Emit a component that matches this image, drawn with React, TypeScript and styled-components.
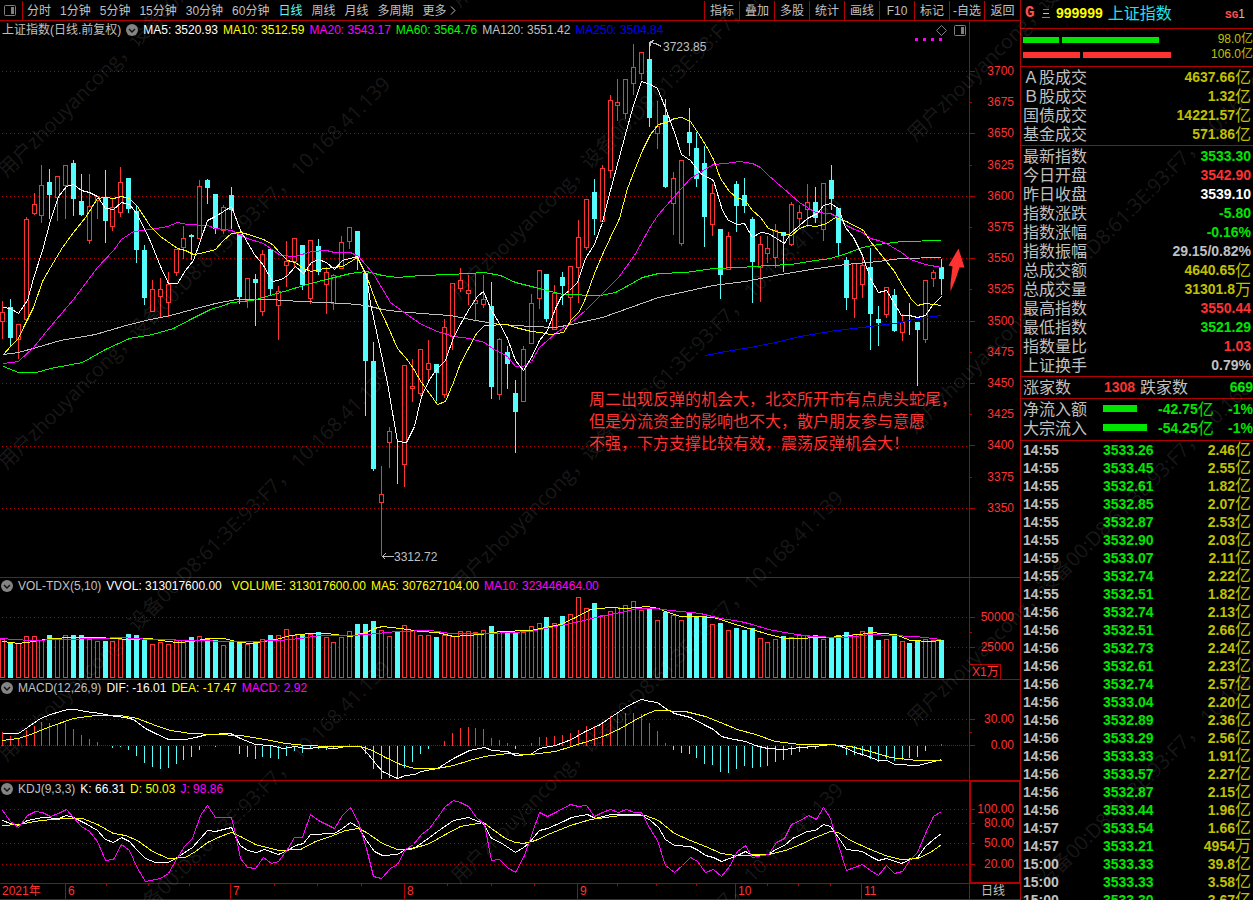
import React from "react";
import styled, { createGlobalStyle, css } from "styled-components";

const RED = "#ff3232";
const LINE = "#b00000";
const CYAN = "#54fcfc";
const GREEN = "#00e600";
const GRAY = "#c0c0c0";
const GOLD = "#c0c000";
const YELLOW = "#ffff00";
const MAGENTA = "#ff00ff";
const WHITE = "#ffffff";

const GlobalStyle = createGlobalStyle`
  * { box-sizing: border-box; }
  body {
    margin: 0;
    background: #000;
    color: ${GRAY};
    font: 12px/16px "Liberation Sans", "Noto Sans CJK SC", sans-serif;
  }
  button { font: inherit; color: inherit; background: none; border: 0; padding: 0; margin: 0; cursor: pointer; }
`;

/* ---------- data ---------- */

type Candle = [up: 0 | 1, high: number, top: number, bottom: number, low: number];

const candles: Candle[] = [
  [1, 300, 312, 321, 338], [0, 298, 307, 338, 345], [1, 324, 324, 339, 358], [1, 216, 219, 319, 319],
  [1, 192, 204, 213, 214], [1, 164, 185, 215, 222], [0, 168, 182, 195, 218], [1, 176, 176, 197, 220],
  [1, 164, 165, 185, 218], [0, 159, 163, 199, 215], [0, 173, 201, 215, 215], [1, 173, 206, 240, 243],
  [1, 196, 196, 200, 218], [0, 169, 197, 221, 242], [1, 197, 207, 226, 230], [1, 166, 182, 212, 216],
  [0, 178, 178, 209, 212], [0, 205, 211, 250, 262], [0, 244, 250, 298, 304], [1, 279, 289, 311, 311],
  [1, 277, 289, 296, 317], [1, 271, 284, 302, 316], [1, 248, 249, 272, 275], [1, 225, 238, 247, 258],
  [0, 233, 235, 237, 259], [1, 179, 186, 238, 238], [0, 178, 180, 188, 203], [0, 193, 194, 229, 233],
  [1, 204, 207, 230, 233], [0, 186, 195, 210, 228], [0, 233, 234, 297, 303], [1, 278, 278, 300, 307],
  [0, 273, 279, 283, 325], [1, 249, 254, 311, 315], [0, 248, 249, 289, 294], [1, 285, 291, 305, 339],
  [1, 240, 261, 265, 286], [1, 237, 238, 261, 267], [0, 245, 245, 285, 289], [1, 239, 240, 298, 303],
  [0, 238, 246, 272, 274], [1, 266, 272, 284, 313], [1, 273, 275, 303, 309], [1, 235, 242, 268, 268],
  [1, 226, 227, 241, 248], [0, 231, 231, 258, 269], [0, 272, 273, 361, 415], [0, 341, 361, 469, 470],
  [1, 465, 494, 502, 555], [1, 426, 431, 442, 467], [0, 440, 448, 449, 483], [1, 365, 365, 464, 486],
  [1, 358, 386, 388, 401], [1, 349, 349, 393, 395], [1, 339, 363, 369, 382], [0, 363, 364, 373, 400],
  [1, 318, 327, 394, 397], [1, 283, 283, 336, 349], [1, 267, 280, 288, 291], [1, 274, 290, 293, 304],
  [1, 272, 300, 303, 319], [1, 274, 299, 304, 307], [0, 281, 306, 387, 398], [1, 337, 339, 394, 399],
  [0, 345, 352, 364, 388], [0, 379, 393, 412, 452], [1, 345, 349, 401, 401], [1, 293, 303, 343, 343],
  [1, 270, 270, 298, 308], [0, 274, 274, 319, 321], [1, 284, 293, 329, 329], [0, 271, 277, 286, 304],
  [1, 266, 266, 297, 322], [1, 219, 237, 267, 302], [1, 199, 199, 247, 249], [0, 178, 192, 219, 234],
  [1, 164, 168, 221, 221], [1, 94, 100, 170, 177], [1, 78, 102, 105, 120], [1, 79, 79, 113, 118],
  [1, 43, 67, 83, 94], [1, 51, 52, 73, 79], [0, 41, 59, 118, 126], [1, 100, 126, 133, 148],
  [0, 98, 115, 187, 187], [1, 171, 178, 203, 234], [1, 160, 160, 243, 245], [0, 107, 132, 143, 155],
  [0, 131, 148, 179, 186], [0, 145, 163, 217, 246], [1, 183, 193, 224, 235], [0, 229, 229, 275, 298],
  [1, 231, 236, 269, 269], [0, 180, 184, 206, 231], [0, 177, 195, 206, 212], [0, 216, 219, 262, 302],
  [1, 235, 244, 267, 301], [1, 235, 248, 253, 262], [1, 223, 230, 257, 267], [0, 232, 232, 236, 271],
  [1, 201, 204, 244, 245], [1, 204, 212, 218, 228], [1, 183, 202, 209, 226], [0, 186, 202, 218, 222],
  [1, 183, 183, 229, 240], [0, 164, 180, 199, 209], [0, 208, 208, 243, 254], [0, 256, 260, 298, 309],
  [1, 263, 263, 298, 317], [1, 255, 265, 284, 297], [0, 247, 267, 314, 349], [0, 305, 319, 323, 345],
  [1, 287, 287, 314, 317], [0, 288, 295, 331, 331], [1, 313, 322, 332, 340], [0, 302, 312, 313, 334],
  [0, 322, 322, 330, 385], [1, 279, 280, 339, 342], [1, 269, 272, 278, 286], [0, 258, 267, 279, 294],
];

const volumes = [
  639, 643, 643, 636, 636, 640, 635, 638, 635, 635, 635, 639, 641, 641, 641, 639, 634, 635, 640, 644,
  642, 644, 640, 640, 637, 636, 638, 640, 645, 642, 642, 644, 641, 639, 635, 635, 629, 635, 634, 634,
  632, 637, 642, 637, 631, 624, 624, 621, 630, 636, 632, 625, 630, 635, 635, 637, 635, 636, 631, 631,
  632, 630, 626, 631, 631, 632, 632, 626, 623, 617, 623, 616, 614, 597, 608, 603, 615, 611, 607, 605,
  601, 610, 609, 620, 612, 615, 620, 613, 616, 616, 624, 623, 630, 628, 630, 628, 638, 642, 639, 636,
  637, 635, 635, 635, 639, 637, 635, 632, 634, 631, 627, 640, 639, 636, 641, 643, 641, 639, 640, 640,
];

const histogram = [
  731, 735, 737, 729, 725, 721, 722, 723, 722, 728, 734, 738, 741, 745, 747, 746, 749, 755, 762, 766,
  768, 767, 763, 759, 756, 749, 745, 746, 745, 745, 753, 756, 758, 756, 757, 758, 755, 750, 752, 748,
  748, 749, 748, 747, 743, 744, 753, 768, 778, 777, 777, 767, 761, 753, 748, 745, 740, 732, 727, 726,
  727, 728, 737, 739, 742, 748, 744, 742, 736, 736, 735, 734, 732, 729, 725, 725, 722, 715, 712, 712,
  712, 713, 722, 730, 742, 749, 752, 753, 757, 763, 764, 771, 772, 768, 765, 767, 766, 765, 761, 759,
  754, 751, 748, 748, 745, 745, 746, 754, 754, 755, 758, 761, 758, 760, 759, 757, 756, 750, 745, 743,
];

const xAt = (i: number) => Math.round(2 + i * 7.891);

const priceLines: [string, string][] = [
  ["#c0c0c0", "3,354 18,352 36,347 60,340 95,334 129,324 150,319 170,315 192,309 215,303 236,299 270,299 300,301 345,303 366,305 382,309 397,311 421,313 450,315 475,320 500,324 531,326 555,327 571,324 602,317 630,307 658,297 690,290 713,285 745,281 775,275 810,269 845,264 878,261 900,258 941,257"],
  ["#0000ff", "705,355 720,352 750,347 775,342 800,336 836,330 870,326 900,322 917,318 941,315"],
  ["#00ff00", "3,366 18,372 36,372 50,368 82,362 105,349 129,338 152,334 173,328 192,318 210,309 223,305 231,302 252,300 266,296 287,290 303,285 318,281 334,277 350,273 366,271 382,275 397,277 421,275 450,274 484,272 500,275 515,282 531,286 550,291 563,294 600,295 615,292 626,286 642,277 658,273 685,272 713,268 739,267 768,265 791,264 815,260 830,258 846,253 862,247 878,244 902,241 941,240"],
  [MAGENTA, "3,363 18,361 33,347 50,326 73,299 97,267 113,250 121,239 133,231 150,229 167,226 177,222 187,224 207,225 215,228 231,230 247,238 263,243 280,255 295,256 311,251 326,250 334,252 350,252 358,256 366,265 374,275 390,302 405,313 421,324 437,331 453,336 469,338 484,342 492,348 507,356 515,366 523,366 531,361 539,347 555,333 571,322 585,310 602,293 618,277 634,255 650,226 658,214 674,196 690,178 698,173 713,164 725,163 739,161 752,163 760,167 768,175 783,188 799,202 815,212 830,213 838,217 846,225 854,229 862,232 870,238 878,240 886,243 901,252 910,259 925,264 941,267"],
  [YELLOW, "3,354 10,346 18,338 24,325 33,307 42,281 50,267 62,247 73,232 85,217 97,198 105,197 113,198 121,196 129,198 137,206 150,226 160,236 177,248 185,250 193,254 200,253 215,249 223,240 231,233 240,232 248,234 263,239 272,244 280,253 287,260 295,262 303,268 311,271 318,269 326,268 342,266 357,257 366,275 375,300 387,325 397,348 405,357 413,368 421,382 429,393 437,404 445,401 453,382 460,363 468,348 476,333 484,325 507,324 515,327 531,331 540,332 550,334 563,332 571,319 579,311 585,298 594,273 602,254 610,237 619,218 627,188 634,170 642,150 650,134 658,124 666,122 674,118 681,117 690,121 698,133 706,146 713,159 720,178 729,191 737,198 744,199 752,210 760,217 768,228 776,231 783,233 791,235 799,228 807,225 816,226 826,223 835,217 846,221 863,230 870,241 878,251 886,261 894,271 902,285 911,299 917,305 925,303 933,304 941,305"],
  [WHITE, "3,307 10,308 18,313 27,300 33,278 42,250 50,220 58,196 66,186 73,184 81,190 89,192 97,196 105,208 113,209 121,202 129,204 137,214 150,241 160,266 168,283 177,283 185,270 193,260 200,240 207,220 215,216 223,211 231,206 240,230 254,254 263,265 272,281 281,279 287,275 295,266 303,273 311,262 318,259 326,262 334,269 342,260 357,256 366,275 370,303 379,345 387,383 397,441 406,442 414,426 421,396 429,379 437,368 445,360 453,337 461,322 469,308 477,296 483,291 491,310 499,323 507,338 515,360 523,370 531,357 539,340 547,330 555,308 561,296 569,290 577,282 585,258 594,244 602,222 610,190 618,160 626,130 633,105 641,81 650,84 657,88 666,110 674,132 681,154 690,160 700,173 713,180 722,210 728,220 737,224 744,223 752,237 760,232 768,233 784,243 790,233 807,218 817,213 823,205 830,203 838,208 845,227 853,237 862,255 870,278 878,292 886,290 894,303 901,315 909,315 917,317 925,315 932,305 941,296"],
];

const volumeLines: [string, string][] = [
  [YELLOW, "2,641 18,643 33,641 50,638 73,637 97,637 113,638 129,639 150,638 160,640 177,642 192,641 207,638 223,638 240,642 250,643 263,641 276,639 290,635 310,633 326,633 350,636 366,632 374,628 382,626 400,628 420,631 437,632 453,636 480,634 500,631 530,630 545,627 560,624 575,617 590,609 610,607 625,608 647,606 658,608 665,611 680,616 697,616 713,617 720,619 735,624 752,629 768,634 785,638 800,638 815,637 830,637 846,635 860,634 870,632 895,634 910,640 930,641 941,640"],
  [MAGENTA, "0,638 30,640 60,639 100,638 120,637 150,639 200,640 225,641 250,641 280,640 300,638 320,635 350,635 366,634 397,631 430,630 450,633 490,633 530,631 550,627 575,622 600,616 620,612 637,608 655,608 670,610 700,613 720,618 740,621 752,624 768,629 790,633 810,636 840,637 855,636 870,634 890,635 915,636 941,639"],
];

const macdLines: [string, string][] = [
  [WHITE, "2,733 18,733 27,727 40,718 50,714 60,711 67,709 75,709 85,711 100,713 115,716 125,717 133,719 145,728 155,733 168,739 185,739 195,737 207,734 230,733 240,738 255,744 270,745 283,748 295,746 305,748 320,747 335,748 345,746 360,746 368,754 375,763 382,771 397,778 405,775 414,774 421,771 437,768 453,758 469,750 484,747 492,750 507,751 515,755 530,754 539,748 555,745 571,739 585,731 600,724 610,717 625,707 634,702 641,699 650,701 657,702 665,708 674,713 690,717 705,725 713,729 721,736 729,738 745,741 755,745 767,748 784,749 800,747 815,746 830,744 838,745 846,748 855,752 865,755 878,760 886,760 895,764 917,765 930,762 941,759"],
  [YELLOW, "2,740 18,738 30,734 50,726 73,718 95,715 120,715 137,718 155,725 170,730 190,733 215,734 240,735 265,739 285,743 305,745 330,746 360,746 372,750 385,757 400,764 414,768 437,768 453,765 469,760 484,756 507,753 530,754 555,751 571,746 590,740 605,735 620,728 634,720 645,714 655,710 685,711 705,716 720,722 737,729 755,734 775,741 800,744 830,744 850,746 870,751 890,757 917,760 941,760"],
];

const kdjLines: [string, string][] = [
  [WHITE, "2,820 10,823 18,825 27,820 42,817 58,818 66,815 73,817 85,823 97,830 105,839 113,842 121,837 129,841 137,850 145,858 155,862 168,862 175,858 192,847 200,838 207,830 215,831 231,827 236,838 240,845 247,850 256,852 264,849 278,854 287,850 295,845 303,843 310,834 334,833 342,828 350,822 358,827 366,840 374,851 382,855 397,854 405,849 415,847 429,837 437,831 453,820 468,817 483,823 491,838 500,842 515,852 523,847 528,843 539,830 547,828 563,821 571,817 587,814 595,818 610,814 640,814 650,820 658,827 665,839 674,845 690,846 698,850 705,855 713,857 721,861 729,858 737,855 745,851 752,855 768,854 775,849 784,845 792,838 807,831 815,830 823,824 830,826 838,837 846,849 862,851 870,856 878,860 886,858 901,863 910,859 917,857 925,846 933,839 941,833"],
  [YELLOW, "2,825 18,824 40,820 66,818 82,818 97,824 113,833 125,835 137,840 152,851 168,858 185,857 195,851 207,842 220,836 231,832 240,836 255,844 278,850 300,849 315,841 330,836 345,830 358,828 366,832 382,843 397,849 410,849 429,843 445,834 460,826 483,822 491,828 505,838 515,842 523,843 535,840 550,833 570,825 590,819 620,815 645,815 658,820 674,833 690,840 705,846 721,853 735,855 768,854 785,850 800,844 815,837 830,831 838,832 850,840 870,849 885,855 900,859 917,858 930,852 941,844"],
  [MAGENTA, "2,810 10,821 18,827 27,815 35,811 42,812 50,816 58,813 66,809 73,817 81,826 89,831 97,841 105,860 113,859 121,844 129,850 137,868 145,881 160,878 168,873 176,859 184,846 192,838 200,815 207,805 215,817 231,817 236,838 240,858 247,867 255,868 263,857 271,863 278,861 287,849 294,837 302,837 310,814 318,820 334,828 342,815 350,807 358,822 366,848 373,876 381,878 390,868 397,864 405,849 413,844 421,834 429,828 437,817 445,806 453,800 460,802 468,806 476,817 484,824 491,860 499,859 507,867 515,872 524,855 531,835 539,812 547,816 555,812 570,804 578,806 586,805 594,816 602,812 610,809 618,812 626,809 634,812 641,812 650,829 657,840 665,865 674,872 682,865 690,857 697,861 705,872 713,869 721,876 729,866 737,851 745,845 752,857 768,854 776,842 784,838 791,824 800,820 808,815 816,819 823,807 830,818 838,845 846,870 854,867 862,864 870,870 878,875 886,865 894,873 902,871 910,859 917,852 925,833 933,816 941,811"],
];

type AxisMark = { y: number; label?: string };

const priceMarks: AxisMark[] = Array.from({ length: 15 }, (_, i) => ({
  y: Math.round(71 + i * 31.2),
  label: String(3700 - i * 25),
}));

const months: [number, string][] = [[65, "6"], [230, "7"], [404, "8"], [577, "9"], [735, "10"], [861, "11"]];
const minorDays = [106, 148, 189, 274, 317, 361, 447, 491, 534, 617, 656, 696, 767, 798, 830];

const periods = ["分时", "1分钟", "5分钟", "15分钟", "30分钟", "60分钟", "日线", "周线", "月线", "多周期"];
const tools = ["指标", "叠加", "多股", "统计", "画线", "F10", "标记", "-自选", "返回"];

type Quote = [label: string, value: string, unit: string, color: string];

const turnover: Quote[] = [
  ["Ａ股成交", "4637.66", "亿", GOLD],
  ["Ｂ股成交", "1.32", "亿", GOLD],
  ["国债成交", "14221.57", "亿", GOLD],
  ["基金成交", "571.86", "亿", GOLD],
];

const quotes: Quote[] = [
  ["最新指数", "3533.30", "", GREEN],
  ["今日开盘", "3542.90", "", RED],
  ["昨日收盘", "3539.10", "", WHITE],
  ["指数涨跌", "-5.80", "", GREEN],
  ["指数涨幅", "-0.16%", "", GREEN],
  ["指数振幅", "29.15/0.82%", "", GRAY],
  ["总成交额", "4640.65", "亿", GOLD],
  ["总成交量", "31301.8", "万", GOLD],
  ["最高指数", "3550.44", "", RED],
  ["最低指数", "3521.29", "", GREEN],
  ["指数量比", "1.03", "", RED],
  ["上证换手", "0.79%", "", GRAY],
];

const flows = [
  { label: "净流入额", bar: 34, value: "-42.75", pct: "-1%" },
  { label: "大宗流入", bar: 44, value: "-54.25", pct: "-1%" },
];

const ticks = `14:55 3533.26 2.46亿
14:55 3533.45 2.55亿
14:55 3532.61 1.82亿
14:55 3532.85 2.07亿
14:55 3532.87 2.53亿
14:55 3532.90 2.03亿
14:55 3533.07 2.11亿
14:55 3532.74 2.22亿
14:55 3532.51 1.82亿
14:56 3532.74 2.13亿
14:56 3532.51 2.66亿
14:56 3532.73 2.24亿
14:56 3532.61 2.23亿
14:56 3532.74 2.57亿
14:56 3533.04 2.20亿
14:56 3532.89 2.36亿
14:56 3533.29 2.56亿
14:56 3533.33 1.91亿
14:56 3533.57 2.27亿
14:56 3532.87 2.15亿
14:56 3533.44 1.96亿
14:57 3533.54 1.66亿
14:57 3533.21 4954万
15:00 3533.33 39.8亿
15:00 3533.33 3.58亿
15:00 3533.30 3.67亿`.split("\n").map((line) => line.split(" "));

/* ---------- layout ---------- */

const Screen = styled.div`
  position: relative;
  display: grid;
  grid-template-columns: minmax(0, 1fr) 233px;
  height: 100vh;
  min-height: 600px;
  overflow: hidden;
  white-space: nowrap;
`;

const Workspace = styled.main`
  display: grid;
  grid-template-rows: 21px minmax(0, 557fr) minmax(0, 102fr) minmax(0, 101fr) minmax(0, 103fr) minmax(0, 16fr);
  min-width: 0;
`;

const Toolbar = styled.nav`
  display: flex;
  justify-content: space-between;
  padding-top: 1px;
  border-bottom: 1px solid ${LINE};
  overflow: hidden;
`;

const Periods = styled.div`
  display: flex;
  align-items: center;
  gap: 9px;
`;

const LayoutButton = styled.button`
  display: flex;
  align-items: center;
  justify-content: center;
  width: 23px;
  height: 19px;
  margin-right: -5px;
  padding-right: 3px;
  border-right: 1px solid ${LINE};
`;

const PeriodButton = styled.button<{ $active?: boolean }>`
  color: ${(p) => (p.$active ? CYAN : GRAY)};
`;

const Tools = styled.div`
  display: flex;
`;

const ToolButton = styled.button`
  width: 35px;
  border-left: 1px solid ${LINE};
  text-align: center;

  &:last-child { width: 36px; }
`;

const Panel = styled.section`
  display: grid;
  grid-template-columns: minmax(0, 1fr) 51px;
  border-bottom: 1px solid ${LINE};
  min-height: 0;
`;

const Plot = styled.div`
  position: relative;
  display: grid;
  grid-template: minmax(0, 1fr) / minmax(0, 1fr);
  min-height: 0;

  > * { grid-area: 1 / 1; }
`;

const PlotSvg = styled.svg`
  display: block;
  width: 100%;
  height: 100%;
  shape-rendering: crispEdges;
`;

const Legend = styled.header<{ $tall?: boolean }>`
  z-index: 1;
  display: flex;
  align-items: center;
  align-self: start;
  gap: 5px;
  height: ${(p) => (p.$tall ? 18 : 16)}px;
  padding-left: ${(p) => (p.$tall ? 2 : 1)}px;
  overflow: hidden;
`;

const LegendItem = styled.span<{ $color?: string; $wide?: boolean }>`
  color: ${(p) => p.$color ?? GRAY};
  margin-right: ${(p) => (p.$wide ? 5 : 0)}px;
`;

const IconButton = styled.button`
  display: flex;
  flex: none;
`;

const LegendTools = styled.div`
  display: flex;
  align-items: center;
  gap: 7px;
  margin-left: auto;
  padding-right: 3px;
`;

const Axis = styled.div<{ $selected?: boolean }>`
  position: relative;
  border-left: 1px solid ${LINE};
  color: ${RED};
  ${(p) => p.$selected && css`box-shadow: inset 0 0 0 1px ${LINE};`}
`;

const AxisLabel = styled.span`
  position: absolute;
  right: 6px;
  transform: translateY(-50%);
`;

const AxisTick = styled.i<{ $minor?: boolean }>`
  position: absolute;
  left: 0;
  width: ${(p) => (p.$minor ? 2 : 5)}px;
  height: 1px;
  background: ${LINE};
`;

const UnitBox = styled.span`
  position: absolute;
  left: 0;
  bottom: 0;
  width: 31px;
  height: 15px;
  padding-left: 2px;
  line-height: 15px;
  border: solid ${LINE};
  border-width: 1px 1px 0 0;
`;

const ChartNote = styled.span`
  position: absolute;
  transform: translateY(-50%);
`;

const Comment = styled.p`
  position: absolute;
  margin: 0;
  font-size: 16px;
  line-height: 22px;
  font-family: "Noto Sans CJK SC", sans-serif;
  color: ${RED};
`;

const MonthLabel = styled.span`
  position: absolute;
  top: 0;
  height: 15px;
  padding-left: 2px;
  line-height: 15px;
  border-left: 1px solid ${LINE};
  color: ${RED};
`;

const YearLabel = styled.span`
  padding-left: 2px;
  line-height: 15px;
  color: ${RED};
`;

const DayTick = styled.i`
  position: absolute;
  top: 0;
  width: 1px;
  height: 2px;
  background: ${LINE};
`;

const PeriodCell = styled.div`
  border-left: 1px solid ${LINE};
  padding-right: 4px;
  text-align: center;
  line-height: 15px;
`;

/* ---------- sidebar ---------- */

const Sidebar = styled.aside`
  border-left: 1px solid ${LINE};
  min-width: 0;
  overflow: hidden;
  font-size: 16px;
  line-height: 19px;
`;

const SideBlock = styled.section`
  padding: 1px 2px;
  border-bottom: 1px solid ${LINE};
`;

const Title = styled.header`
  display: flex;
  align-items: center;
  height: 29px;
  padding: 0 8px 2px 4px;
  border-bottom: 1px solid ${LINE};
`;

const Code = styled.b`
  margin: 0 5px 0 6px;
  font-size: 14px;
  color: ${YELLOW};
`;

const IndexName = styled.h1`
  margin: 0;
  font-size: 16px;
  font-weight: 400;
  color: #22e0f0;
`;

const Flag = styled.b`
  width: 17px;
  font-family: "Liberation Mono", monospace;
  font-size: 16px;
  color: #ff5050;
`;

const Source = styled.span`
  margin-left: auto;
  padding-top: 3px;
  font-size: 12px;

  b {
    font-family: "Liberation Mono", monospace;
    font-size: 11px;
    color: #ff5050;
  }
`;

const Depth = styled.section`
  padding: 3px 0 4px 2px;
  border-bottom: 1px solid ${LINE};
`;

const DepthRow = styled.div`
  display: flex;
  align-items: center;
  height: 15px;
  gap: 3px;
  font-size: 12px;
  color: ${GOLD};

  span { margin-left: auto; }
`;

const DepthBar = styled.i<{ $w: number; $color: string }>`
  width: ${(p) => p.$w}px;
  height: 6px;
  background: ${(p) => p.$color};
`;

const DataTable = styled.table`
  width: 100%;
  border-collapse: collapse;

  th, td { padding: 0; font-weight: 400; text-align: left; }
`;

const Row = styled.tr<{ $h: number }>`
  height: ${(p) => p.$h}px;
  line-height: ${(p) => p.$h}px;
`;

const TimeCell = styled.td`
  width: 80px;
`;

const Figure = styled.b<{ $color?: string }>`
  display: inline-block;
  vertical-align: top;
  font-size: 14px;
  color: ${(p) => p.$color ?? "inherit"};
`;

const Unit = styled.span<{ $color: string }>`
  display: inline-block;
  vertical-align: top;
  font-size: 16px;
  color: ${(p) => p.$color};
`;

const ValueCell = styled.td`
  && { text-align: right; }
`;

const Breadth = styled.section`
  display: grid;
  grid-template-columns: 81px 36px 1fr auto;
  height: 22px;
  padding-left: 2px;
  line-height: 21px;
  border-bottom: 1px solid ${LINE};
`;

const FlowBlock = styled.section`
  height: 42px;
  padding: 1px 0 2px 2px;
  border-bottom: 1px solid ${LINE};
`;

const FlowRow = styled.div`
  display: grid;
  grid-template-columns: 80px 55px 1fr auto;
  height: 19px;
`;

const FlowBar = styled.i<{ $w: number }>`
  width: ${(p) => p.$w}px;
  height: 7px;
  margin-top: 5px;
  background: ${GREEN};
`;

const TickBlock = styled.section`
  padding: 0 2px;
`;

const Watermark = styled.div`
  position: absolute;
  inset: 0;
  overflow: hidden;
  pointer-events: none;
  color: rgba(255, 255, 255, 0.1);
  font: 20px/24px "Open Sans", "Noto Sans CJK SC", sans-serif;
`;

const WatermarkText = styled.span`
  position: absolute;
  transform: rotate(-45deg);
  transform-origin: 0 100%;
  white-space: pre;
`;

/* ---------- pieces ---------- */

const Collapse = () => (
  <IconButton aria-label="收起">
    <svg width="12" height="12" viewBox="0 0 12 12">
      <circle cx="6" cy="6" r="6" fill="#848484" />
      <path d="M3 5 L6 8 L9 5" fill="none" stroke="#101010" strokeWidth="1.4" />
    </svg>
  </IconButton>
);

const PanelIcon = () => (
  <svg width="12" height="11" viewBox="0 0 12 11">
    <rect x="0.5" y="0.5" width="11" height="10" rx="1" fill="none" stroke="#808080" />
    <rect x="7" y="2" width="3" height="7" fill="#808080" />
  </svg>
);

const Grid = ({ ys }: { ys: number[] }) => (
  <>
    {ys.map((y) => (
      <line key={y} x1={1} x2={966} y1={y} y2={y} stroke={LINE} strokeDasharray="1 3" />
    ))}
  </>
);

const Lines = ({ data }: { data: [string, string][] }) => (
  <>
    {data.map(([color, points]) => (
      <polyline key={color} points={points} fill="none" stroke={color} />
    ))}
  </>
);

const Scale = ({ top, height, marks }: { top: number; height: number; marks: AxisMark[] }) => (
  <>
    {marks.map(({ y, label }, i) => {
      const at = `${((y - top) / height) * 100}%`;
      const minor = !label || (marks.length > 10 && i % 2 === 1);
      return (
        <React.Fragment key={y}>
          <AxisTick $minor={minor} style={{ top: at }} />
          {label && <AxisLabel style={{ top: at }}>{label}</AxisLabel>}
        </React.Fragment>
      );
    })}
  </>
);

const QuoteTable = ({ rows }: { rows: Quote[] }) => (
  <DataTable>
    <tbody>
      {rows.map(([label, value, unit, color]) => (
        <Row $h={19} key={label}>
          <th scope="row">{label}</th>
          <ValueCell>
            <Figure $color={color}>{value}</Figure>
            {unit && <Unit $color={color}>{unit}</Unit>}
          </ValueCell>
        </Row>
      ))}
    </tbody>
  </DataTable>
);

const noteAt = (x: number, y: number) => ({
  left: `${(x / 969) * 100}%`,
  top: `${((y - 21) / 556) * 100}%`,
});

const watermarkStarts = [[10, 182], [463, 12], [919, 146]].flatMap(([x, y]) =>
  [0, 1, 2, 3, 4].map((row) => [x, y + row * 292])
);

export default function App() {
  return (
    <>
      <GlobalStyle />
      <Screen>
        <Workspace>
          <Toolbar>
            <Periods>
              <LayoutButton aria-label="布局"><PanelIcon /></LayoutButton>
              {periods.map((p) => (
                <PeriodButton key={p} $active={p === "日线"}>{p}</PeriodButton>
              ))}
              <PeriodButton>
                更多{" "}
                <svg width="6" height="9" viewBox="0 0 6 9">
                  <path d="M1 0.5 L5 4.5 L1 8.5" fill="none" stroke={GRAY} />
                </svg>
              </PeriodButton>
            </Periods>
            <Tools>
              {tools.map((t) => <ToolButton key={t}>{t}</ToolButton>)}
            </Tools>
          </Toolbar>

          <Panel>
            <Plot>
              <PlotSvg viewBox="-0.5 20.5 969 556" preserveAspectRatio="none">
                <Grid ys={[71, 133, 196, 258, 321, 383, 446, 508]} />
                {candles.map(([up, high, top, bottom, low], i) => {
                  const x = xAt(i);
                  const end = up ? bottom : Math.max(top, bottom - 1);
                  const color = up ? RED : CYAN;
                  return (
                    <g key={i} stroke={color}>
                      {high < top && <line x1={x} x2={x} y1={high} y2={top} />}
                      {low > end && <line x1={x} x2={x} y1={end} y2={low} />}
                      <rect x={x - 2} y={top} width={4} height={end - top} fill={up ? "#000" : CYAN} />
                    </g>
                  );
                })}
                <Lines data={priceLines} />
                <g stroke={GRAY} fill="none">
                  <path d="M650 42 L655 43 L661 46 M650 42 L650 45 M650 41 L654 40" />
                  <path d="M381 556 H393 M385 553 L382 556 L385 559" />
                </g>
                <path
                  d="M958 248 L964 267 L959 267 L955 279 L950 291 L950 283 L952 266 L948 265 Z"
                  fill={RED}
                  shapeRendering="auto"
                />
                <g fill={MAGENTA}>
                  {[915, 923, 931, 939].map((x) => (
                    <rect key={x} x={x - 0.5} y={37.5} width={3} height={3} />
                  ))}
                </g>
              </PlotSvg>
              <Legend $tall>
                <LegendItem>上证指数(日线.前复权)</LegendItem>
                <Collapse />
                <LegendItem $color={WHITE}>MA5: 3520.93</LegendItem>
                <LegendItem $color={YELLOW}>MA10: 3512.59</LegendItem>
                <LegendItem $color={MAGENTA}>MA20: 3543.17</LegendItem>
                <LegendItem $color="#00ff00">MA60: 3564.76</LegendItem>
                <LegendItem>MA120: 3551.42</LegendItem>
                <LegendItem $color="#0000ff">MA250: 3504.84</LegendItem>
                <LegendTools>
                  <IconButton aria-label="标记">
                    <svg width="11" height="11" viewBox="0 0 11 11">
                      <path d="M5.5 0.5 L10.5 5.5 L5.5 10.5 L0.5 5.5 Z" fill="none" stroke="#808080" />
                    </svg>
                  </IconButton>
                  <IconButton aria-label="侧栏"><PanelIcon /></IconButton>
                </LegendTools>
              </Legend>
              <ChartNote style={noteAt(663, 47)}>3723.85</ChartNote>
              <ChartNote style={noteAt(394, 557)}>3312.72</ChartNote>
              <Comment style={noteAt(589, 387)}>
                周二出现反弹的机会大，北交所开市有点虎头蛇尾，
                <br />
                但是分流资金的影响也不大，散户朋友参与意愿
                <br />
                不强，下方支撑比较有效，震荡反弹机会大！
              </Comment>
            </Plot>
            <Axis>
              <Scale top={21} height={556} marks={priceMarks} />
            </Axis>
          </Panel>

          <Panel>
            <Plot>
              <PlotSvg viewBox="-0.5 577.5 969 101" preserveAspectRatio="none">
                <Grid ys={[617, 647]} />
                {volumes.map((top, i) => (
                  <rect
                    key={i}
                    x={xAt(i) - 2}
                    y={top}
                    width={4}
                    height={677 - top}
                    stroke={candles[i][0] ? RED : CYAN}
                    fill={candles[i][0] ? "#000" : CYAN}
                  />
                ))}
                <Lines data={volumeLines} />
              </PlotSvg>
              <Legend>
                <Collapse />
                <LegendItem>VOL-TDX(5,10)</LegendItem>
                <LegendItem $color={WHITE} $wide>VVOL: 313017600.00</LegendItem>
                <LegendItem $color={YELLOW}>VOLUME: 313017600.00</LegendItem>
                <LegendItem $color={YELLOW}>MA5: 307627104.00</LegendItem>
                <LegendItem $color={MAGENTA}>MA10: 323446464.00</LegendItem>
              </Legend>
            </Plot>
            <Axis>
              <Scale top={578} height={101} marks={[{ y: 617, label: "50000" }, { y: 632 }, { y: 647, label: "25000" }]} />
              <UnitBox>X1万</UnitBox>
            </Axis>
          </Panel>

          <Panel>
            <Plot>
              <PlotSvg viewBox="-0.5 679.5 969 100" preserveAspectRatio="none">
                <Grid ys={[719]} />
                <line x1={0} x2={968} y1={745} y2={745} stroke={LINE} strokeDasharray="1 1" />
                {histogram.map((y, i) => (
                  y !== 745 && (
                    <line key={i} x1={xAt(i)} x2={xAt(i)} y1={745} y2={y} stroke={y < 745 ? RED : CYAN} />
                  )
                ))}
                <Lines data={macdLines} />
              </PlotSvg>
              <Legend>
                <Collapse />
                <LegendItem>MACD(12,26,9)</LegendItem>
                <LegendItem $color={WHITE}>DIF: -16.01</LegendItem>
                <LegendItem $color={YELLOW}>DEA: -17.47</LegendItem>
                <LegendItem $color={MAGENTA}>MACD: 2.92</LegendItem>
              </Legend>
            </Plot>
            <Axis>
              <Scale top={680} height={100} marks={[{ y: 719, label: "30.00" }, { y: 732 }, { y: 745, label: "0.00" }]} />
            </Axis>
          </Panel>

          <Panel>
            <Plot>
              <PlotSvg viewBox="-0.5 780.5 969 102" preserveAspectRatio="none">
                <Grid ys={[809, 823, 843, 864]} />
                <Lines data={kdjLines} />
              </PlotSvg>
              <Legend>
                <Collapse />
                <LegendItem>KDJ(9,3,3)</LegendItem>
                <LegendItem $color={WHITE}>K: 66.31</LegendItem>
                <LegendItem $color={YELLOW}>D: 50.03</LegendItem>
                <LegendItem $color={MAGENTA}>J: 98.86</LegendItem>
              </Legend>
            </Plot>
            <Axis $selected>
              <Scale
                top={781}
                height={102}
                marks={[
                  { y: 809, label: "100.00" },
                  { y: 823, label: "80.00" },
                  { y: 843, label: "50.00" },
                  { y: 864, label: "20.00" },
                ]}
              />
            </Axis>
          </Panel>

          <Panel>
            <Plot>
              <YearLabel>2021年</YearLabel>
              {months.map(([x, m]) => (
                <MonthLabel key={m} style={{ left: `${(x / 969) * 100}%` }}>{m}</MonthLabel>
              ))}
              {minorDays.map((x) => (
                <DayTick key={x} style={{ left: `${(x / 969) * 100}%` }} />
              ))}
            </Plot>
            <PeriodCell>日线</PeriodCell>
          </Panel>
        </Workspace>

        <Sidebar>
          <Title>
            <Flag>G</Flag>
            <svg width="8" height="9" viewBox="0 0 8 9" shapeRendering="crispEdges">
              <rect x="1" y="0" width="6" height="1" fill={RED} />
              <rect x="1" y="4" width="6" height="1" fill={GRAY} />
              <rect x="0" y="8" width="8" height="1" fill={GREEN} />
            </svg>
            <Code>999999</Code>
            <IndexName>上证指数</IndexName>
            <Source><b>SG</b>1</Source>
          </Title>
          <Depth>
            <DepthRow>
              <DepthBar $w={36} $color={GREEN} />
              <DepthBar $w={97} $color={GREEN} />
              <span>98.0亿</span>
            </DepthRow>
            <DepthRow>
              <DepthBar $w={57} $color={RED} />
              <DepthBar $w={88} $color={RED} />
              <span>106.0亿</span>
            </DepthRow>
          </Depth>
          <SideBlock><QuoteTable rows={turnover} /></SideBlock>
          <SideBlock><QuoteTable rows={quotes} /></SideBlock>
          <Breadth>
            <span>涨家数</span>
            <Figure $color={RED}>1308</Figure>
            <span>跌家数</span>
            <Figure $color={GREEN}>669</Figure>
          </Breadth>
          <FlowBlock>
            {flows.map((f) => (
              <FlowRow key={f.label}>
                <span>{f.label}</span>
                <FlowBar $w={f.bar} />
                <span>
                  <Figure $color={GREEN}>{f.value}</Figure>
                  <Unit $color={GREEN}>亿</Unit>
                </span>
                <Figure $color={GREEN}>{f.pct}</Figure>
              </FlowRow>
            ))}
          </FlowBlock>
          <TickBlock>
            <DataTable>
              <tbody>
                {ticks.map(([time, price, amount], i) => (
                  <Row $h={18} key={i}>
                    <TimeCell><Figure>{time}</Figure></TimeCell>
                    <td><Figure $color={GREEN}>{price}</Figure></td>
                    <ValueCell>
                      <Figure $color={GOLD}>{amount.slice(0, -1)}</Figure>
                      <Unit $color={GOLD}>{amount.slice(-1)}</Unit>
                    </ValueCell>
                  </Row>
                ))}
              </tbody>
            </DataTable>
          </TickBlock>
        </Sidebar>

        <Watermark aria-hidden="true">
          {watermarkStarts.map(([x, y]) => (
            <WatermarkText key={`${x}-${y}`} style={{ left: x, top: y - 24 }}>
              用户zhouyancong，设备00:D8:61:3E:93:F7， 10.168.41.139
            </WatermarkText>
          ))}
        </Watermark>
      </Screen>
    </>
  );
}
